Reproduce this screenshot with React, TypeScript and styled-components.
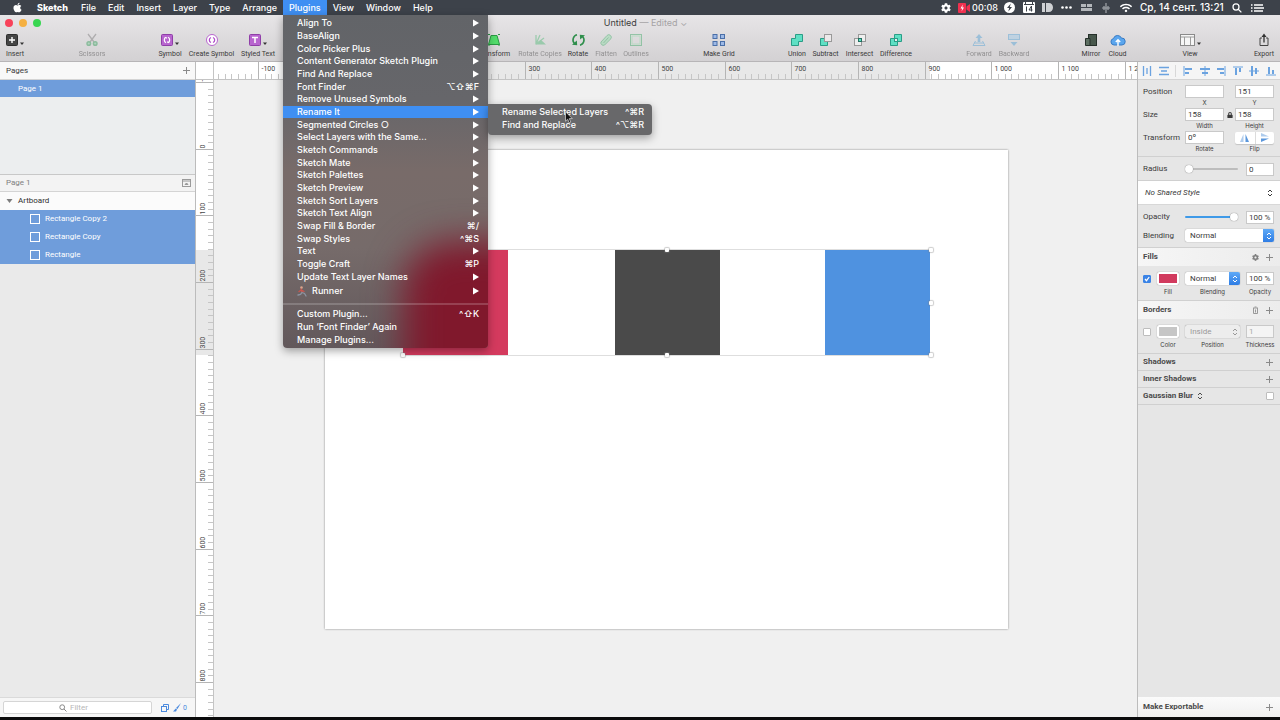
import React, { useState } from 'react';
import styled, { createGlobalStyle, css } from 'styled-components';
import { FaApple, FaCog, FaWifi, FaLock } from 'react-icons/fa';

const ui = `Roboto, "Liberation Sans", sans-serif`;
const menuFont = `Inter, "Liberation Sans", "DejaVu Sans", sans-serif`;

const GlobalStyle = createGlobalStyle`
  * { box-sizing: border-box; }
  body { margin: 0; background: #0b0b0c; font: 8px/10px ${ui}; color: #3a3a3a; }
  button, input, select { font: inherit; color: inherit; margin: 0; padding: 0; border: 0; background: none; }
  ul { list-style: none; margin: 0; padding: 0; }
  svg { display: block; }
`;

const Screen = styled.div`
  display: flex;
  flex-direction: column;
  height: 100vh;
  padding-bottom: 3px;
  overflow: hidden;
`;

/* ---------- System menu bar ---------- */

const MenuBar = styled.header`
  display: flex;
  justify-content: space-between;
  flex: none;
  height: 15px;
  background: #3d424a;
  color: #fff;
  font: 500 9px/15px ${menuFont};
`;

const MenuTitles = styled.nav`
  display: flex;
  padding-left: 12px;
`;

const AppleMark = styled.span`
  display: flex;
  align-items: center;
  width: 19px;
`;

const MenuSlot = styled.div`
  position: relative;
`;

const MenuTitle = styled.button<{ $bold?: boolean; $open?: boolean }>`
  height: 15px;
  padding: 0 ${(p) => (p.$bold ? 7 : 6)}px 0 6px;
  line-height: 15px;
  font-weight: ${(p) => (p.$bold ? 800 : 500)};
  background: ${(p) => (p.$open ? '#3f8ff3' : 'transparent')};
`;

const StatusItems = styled.div`
  display: flex;
  align-items: center;
  padding-right: 10px;
`;

const Status = styled.span<{ $w: number }>`
  display: flex;
  align-items: center;
  justify-content: center;
  width: ${(p) => p.$w}px;
  height: 15px;
`;

const Clock = styled.span`
  width: 94px;
  padding-left: 4px;
  font-size: 10px;
  white-space: nowrap;
`;

/* ---------- Drop-down menus ---------- */

const menuShell = css`
  position: absolute;
  z-index: 10;
  border-radius: 0 0 4px 4px;
  box-shadow: 0 3px 8px rgba(0, 0, 0, 0.35);
  color: #fff;
  font: 500 9px/12px ${menuFont};
`;

const Dropdown = styled.div`
  ${menuShell}
  top: 15px;
  left: 0;
  width: 205px;
  padding: 2px 0;
`;

const Vibrancy = styled.div`
  position: absolute;
  inset: 0;
  z-index: -1;
  overflow: hidden;
  border-radius: 0 0 4px 4px;
  background: linear-gradient(#626468, #66666a 25%, #786b69 47%, #766b6a 70%, #62585b);

  &::after {
    content: '';
    position: absolute;
    left: 120px;
    top: 226px;
    width: 150px;
    height: 180px;
    border-radius: 50px;
    background: #80182c;
    filter: blur(18px);
  }
`;

const Submenu = styled.div`
  ${menuShell}
  top: -2px;
  left: 100%;
  width: 164px;
  padding: 2px 0 3px;
  border-radius: 0 4px 4px 4px;
  background: #68686a;
`;

const MenuList = styled.ul<{ $height: number }>`
  display: grid;
  grid-auto-rows: 1fr;
  height: ${(p) => p.$height}px;
`;

const MenuItem = styled.li`
  position: relative;
  display: grid;
`;

const MenuCommand = styled.button<{ $active?: boolean; $tight?: boolean }>`
  display: flex;
  align-items: center;
  justify-content: space-between;
  width: 100%;
  padding: 0 ${(p) => (p.$tight ? 8 : 9)}px 0 14px;
  text-align: left;
  white-space: nowrap;
  background: ${(p) => (p.$active ? '#3f8ff3' : 'transparent')};
`;

const Shortcut = styled.span`
  font-family: Inter, 'DejaVu Sans', sans-serif;
`;

const Separator = styled.hr`
  height: 2px;
  margin: 4px 0 3px;
  border: 0;
  background: rgba(255, 255, 255, 0.18);
`;

const WithIcon = styled.span`
  display: flex;
  align-items: center;
  gap: 5px;
`;

/* ---------- Window and toolbar ---------- */

const Window = styled.div`
  display: flex;
  flex-direction: column;
  flex: 1;
  min-height: 0;
`;

const TitleBar = styled.div`
  display: grid;
  grid-template-columns: 1fr auto 1fr;
  align-items: center;
  height: 15px;
  padding-left: 5px;
  font: 9px/15px ${menuFont};
`;

const Chrome = styled.div`
  flex: none;
  height: 47px;
  border-bottom: 1px solid #b7b5b7;
  background: linear-gradient(#e7e5e7, #d3d1d3);
`;

const Lights = styled.div`
  display: flex;
  gap: 6px;
`;

const Light = styled.button<{ $color: string }>`
  width: 8px;
  height: 8px;
  border-radius: 4px;
  background: ${(p) => p.$color};
`;

const Title = styled.span`
  padding-left: 6px;
  color: #3c3c3c;
`;

const Muted = styled.span`
  color: #a5a3a5;
`;

const Tools = styled.div`
  display: flex;
  height: 31px;
`;

const Tool = styled.button<{ $w: number; $off?: boolean }>`
  display: flex;
  flex-direction: column;
  align-items: center;
  flex: none;
  width: ${(p) => p.$w}px;
  padding-top: 1px;
  font: 7px/10px ${ui};
  white-space: nowrap;
  opacity: ${(p) => (p.$off ? 0.45 : 1)};
`;

const ToolFace = styled.span`
  display: flex;
  align-items: center;
  gap: 2px;
  height: 17px;
  margin-bottom: 1px;
`;

const FlexSpace = styled.span<{ $grow: number }>`
  flex: ${(p) => p.$grow} 0 0;
`;

const Body = styled.div`
  display: flex;
  flex: 1;
  min-height: 0;
`;

/* ---------- Layer sidebar ---------- */

const Sidebar = styled.aside`
  display: flex;
  flex-direction: column;
  flex: none;
  width: 196px;
  border-right: 1px solid #bcbcbc;
  background: #eaeaea;
`;

const PaneHeader = styled.div<{ $muted?: boolean }>`
  display: flex;
  align-items: center;
  justify-content: space-between;
  height: 18px;
  padding: 0 4px 0 6px;
  border-bottom: 1px solid #d4d4d4;
  border-top: ${(p) => (p.$muted ? '1px solid #c8c8c8' : '0')};
  background: ${(p) => (p.$muted ? '#f3f3f3' : '#f8f8f8')};
  color: ${(p) => (p.$muted ? '#808080' : '#3a3a3a')};
`;

const IconButton = styled.button`
  display: flex;
  align-items: center;
  justify-content: center;
  width: 10px;
  height: 10px;
  color: #808080;
`;

const Pages = styled.ul`
  height: 94px;
  background: #eceeef;
`;

const PageRow = styled.li`
  height: 17px;
  padding-left: 18px;
  line-height: 18px;
  background: #6f9ddb;
  color: #fff;
`;

const LayerRow = styled.li<{ $selected?: boolean }>`
  display: flex;
  align-items: center;
  gap: ${(p) => (p.$selected ? 5 : 4)}px;
  height: 18px;
  padding-left: ${(p) => (p.$selected ? 30 : 5)}px;
  background: ${(p) => (p.$selected ? '#6f9ddb' : '#fbfbfb')};
  color: ${(p) => (p.$selected ? '#fff' : '#2f2f2f')};
`;

const Fill = styled.div`
  flex: 1;
`;

const SidebarFooter = styled.footer`
  display: flex;
  align-items: center;
  height: 20px;
  padding: 0 4px 0 3px;
  border-top: 1px solid #dadada;
  background: #f6f6f6;
  color: #4b8ade;
`;

const FilterBox = styled.label`
  display: flex;
  align-items: center;
  gap: 3px;
  width: 154px;
  height: 13px;
  margin-right: 9px;
  padding-left: 55px;
  border: 1px solid #d5d5d5;
  border-radius: 2px;
  background: #fff;
  color: #8a8a8a;
`;

const FilterInput = styled.input`
  width: 60px;
  height: 10px;
  outline: 0;
  &::placeholder { color: #b8b8b8; }
`;

const FooterToggle = styled.button`
  display: flex;
  align-items: center;
  gap: 2px;
  margin-right: 4px;
  font-size: 7px;
`;

/* ---------- Canvas ---------- */

const Editor = styled.main`
  display: grid;
  grid-template-columns: 18px 1fr;
  grid-template-rows: 18px 1fr;
  flex: 1;
  min-width: 0;
  overflow: hidden;
  background: #f0f0f0;
`;

const Corner = styled.div`
  border-right: 1px solid #c4c4c4;
  border-bottom: 1px solid #c4c4c4;
  background: #fff;
`;

const RulerPane = styled.div<{ $vertical?: boolean }>`
  overflow: hidden;
  background: #fff;
  border-bottom: ${(p) => (p.$vertical ? '0' : '1px solid #c4c4c4')};
  border-right: ${(p) => (p.$vertical ? '1px solid #c4c4c4' : '0')};

  svg { width: 100%; height: 100%; }
  text { font: 7px ${ui}; fill: #444; }
`;

const Canvas = styled.div`
  position: relative;
  overflow: hidden;
`;

const Artboard = styled.div`
  position: absolute;
  left: 111px;
  top: 70px;
  width: 683px;
  height: 479px;
  background: #fff;
  box-shadow: 0 0 2px rgba(0, 0, 0, 0.45);
`;

const Selection = styled.div`
  position: absolute;
  left: 78px;
  top: 99px;
  width: 528px;
  height: 107px;
  border: solid #dedede;
  border-width: 1px 0;
`;

const Shape = styled.div<{ $x: number; $color: string }>`
  position: absolute;
  left: ${(p) => p.$x}px;
  top: 0;
  width: 105px;
  height: 105px;
  background: ${(p) => p.$color};
`;

const Handle = styled.span<{ $x: number; $y: number }>`
  position: absolute;
  left: calc(${(p) => p.$x}% - 2px);
  top: calc(${(p) => p.$y}% - 2px);
  width: 4px;
  height: 4px;
  border-radius: 1px;
  background: #fff;
  box-shadow: 0 0 1px 1px rgba(130, 130, 130, 0.4);
`;

const Pointer = styled.svg`
  position: absolute;
  z-index: 20;
  left: 77px;
  top: 7px;
`;

/* ---------- Inspector ---------- */

const Inspector = styled.aside`
  display: flex;
  flex-direction: column;
  flex: none;
  width: 143px;
  border-left: 1px solid #bcbcbc;
  background: #e6e6e6;
`;

const AlignBar = styled.div`
  display: flex;
  align-items: center;
  justify-content: space-between;
  height: 18px;
  padding: 0 4px;
  border-bottom: 1px solid #d4d4d4;
  background: #f5f5f5;
`;

const AlignRule = styled.span`
  width: 1px;
  height: 12px;
  background: #d8d8d8;
`;

const Group = styled.section<{ $height: number; $top: number }>`
  height: ${(p) => p.$height}px;
  padding: ${(p) => p.$top}px 6px 0 5px;
  border-bottom: 1px solid #d0d0d0;
`;

const PairRow = styled.div`
  display: grid;
  grid-template-columns: 42px 39px 11px 39px;
  grid-template-rows: 13px 10px;
  justify-items: center;
  align-items: center;
  height: 23px;
`;

const RowName = styled.span`
  justify-self: start;
`;

const Caption = styled.label<{ $col: number }>`
  grid-column: ${(p) => p.$col};
  grid-row: 2;
  font: 6px/8px ${menuFont};
  white-space: nowrap;
`;

const Field = styled.input`
  width: 100%;
  height: 13px;
  padding: 0 1px 0 2px;
  border: 1px solid #c9c9c9;
  background: #fff;
  outline: 0;
  &:disabled { color: #a8a8a8; background: #f4f4f4; }
`;

const FlipPair = styled.div`
  display: grid;
  grid-template-columns: 1fr 1fr;
  width: 100%;
  height: 12px;
  border-radius: 2px;
  background: #fff;
  box-shadow: 0 1px 1px rgba(0, 0, 0, 0.15);
`;

const FlipButton = styled.button`
  display: flex;
  align-items: center;
  justify-content: center;
  & + & { border-left: 1px solid #dcdcdc; }
`;

const SliderRow = styled.div`
  display: grid;
  grid-template-columns: 42px 53px 28px;
  justify-items: start;
  align-items: center;
  height: 18px;

  & > :last-child { margin-left: 8px; }
`;

const Slider = styled.input<{ $blue?: boolean }>`
  appearance: none;
  width: 100%;
  height: 8px;
  &::-webkit-slider-runnable-track {
    height: 2px;
    border-radius: 1px;
    background: ${(p) => (p.$blue ? '#3f9ae8' : '#bdbdbd')};
  }
  &::-webkit-slider-thumb {
    appearance: none;
    width: 8px;
    height: 8px;
    margin-top: -3px;
    border-radius: 4px;
    background: #fff;
    box-shadow: 0 0 1px rgba(0, 0, 0, 0.6);
  }
`;

const SelectRow = styled.div`
  display: grid;
  grid-template-columns: 42px 89px;
  align-items: center;
  height: 19px;
`;

const SelectBox = styled.span`
  position: relative;
  display: block;
  width: 100%;
`;

const Popup = styled.select`
  appearance: none;
  display: block;
  width: 100%;
  height: 13px;
  padding: 0 5px;
  border-radius: 2px;
  background: #fff;
  box-shadow: 0 0 1px rgba(0, 0, 0, 0.5);
  &:disabled { color: #999; opacity: 1; background: #ededed; }
`;

const PopupCap = styled.span<{ $plain?: boolean }>`
  position: absolute;
  right: 0;
  top: 0;
  display: flex;
  align-items: center;
  justify-content: center;
  width: 11px;
  height: 13px;
  border-radius: 0 2px 2px 0;
  color: ${(p) => (p.$plain ? '#999' : '#fff')};
  background: ${(p) => (p.$plain ? 'transparent' : 'linear-gradient(#5ea9f7, #2f7de4)')};
  pointer-events: none;
`;

const SharedStyle = styled.button`
  display: flex;
  align-items: center;
  justify-content: space-between;
  height: 24px;
  padding: 0 7px;
  border-bottom: 1px solid #d8d8d8;
  background: #fff;
  font: italic 8px/10px ${ui};
`;

const SectionHead = styled.h2<{ $light?: boolean }>`
  display: flex;
  align-items: center;
  gap: 4px;
  height: ${(p) => (p.$light ? 18 : 17)}px;
  margin: 0;
  padding: 0 6px 0 5px;
  border-bottom: ${(p) => (p.$light ? '0' : '1px solid #d0d0d0')};
  background: ${(p) => (p.$light ? 'linear-gradient(90deg, #f6f6f6, #ececec)' : 'transparent')};
  font: 700 8px/10px ${ui};
  color: #4a4a4a;
`;

const StyleRow = styled.div`
  display: grid;
  grid-template-columns: 8px 22px 55px 28px;
  grid-template-rows: 13px 13px;
  justify-content: space-between;
  justify-items: center;
  align-items: center;
`;

const Tick = styled.input`
  appearance: none;
  display: block;
  width: 8px;
  height: 8px;
  border: 1px solid #bdbdbd;
  border-radius: 1px;
  background: #fff;
  &:checked { border-color: #3b84e6; background: #3b84e6; }
`;

const TickMark = styled.span`
  position: relative;
  display: block;
  width: 8px;
  height: 8px;
  svg { position: absolute; inset: 0; pointer-events: none; }
`;

const Well = styled.button<{ $color: string }>`
  width: 22px;
  height: 13px;
  border: 2px solid #fff;
  border-radius: 2px;
  background: ${(p) => p.$color};
  box-shadow: 0 0 1px rgba(0, 0, 0, 0.5);
`;

const InspectorFooter = styled.footer`
  display: flex;
  align-items: center;
  justify-content: space-between;
  height: 20px;
  padding: 0 6px 0 5px;
  background: linear-gradient(#fbfbfb, #efefef);
  font-weight: 700;
  color: #4a4a4a;
`;

/* ---------- Drawings ---------- */

const Plus = () => (
  <svg width="9" height="9" viewBox="0 0 9 9" stroke="#8a8a8a"><path d="M4.5 1v7M1 4.5h7" /></svg>
);
const Caret = () => (
  <svg width="4" height="15" viewBox="0 0 4 15" fill="#333"><path d="M0 10.500h4l-2 2.500z" /></svg>
);
const UpDown = () => (
  <svg width="6" height="8" viewBox="0 0 6 8" fill="none" stroke="currentColor"><path d="M1 3l2-2 2 2M1 5l2 2 2-2" /></svg>
);
const Arrow = () => (
  <svg width="6" height="8" viewBox="0 0 6 8" fill="#fff"><path d="M0 0.500v7l6-3.500z" /></svg>
);
const Lens = ({ size = 8 }: { size?: number }) => (
  <svg width={size} height={size} viewBox="0 0 8 8" fill="none" stroke="currentColor"><circle cx="3.200" cy="3.200" r="2.400" /><path d="M5 5l2.500 2.500" /></svg>
);

const art = (children: React.ReactNode, w = 14) => (
  <svg width={w} height="14" viewBox={`0 0 ${w} 14`} fill="none">{children}</svg>
);

const icons: Record<string, React.ReactNode> = {
  insert: art(<><rect x="0.500" y="1.500" width="11" height="11" rx="1" fill="#454545" stroke="#2e2e2e" /><path d="M6 4v6M3 7h6" stroke="#fff" strokeWidth="1.400" /></>, 12),
  scissors: art(<><path d="M3 1l6 8M11 1L5 9" stroke="#777" strokeWidth="1.300" /><circle cx="3.800" cy="10.500" r="1.800" fill="#7fcf9b" stroke="#2f9a55" strokeWidth="1.500" /><circle cx="10.200" cy="10.500" r="1.800" fill="#7fcf9b" stroke="#2f9a55" strokeWidth="1.500" /></>),
  symbol: art(<><rect x="0.500" y="1.500" width="11" height="11" rx="1" fill="#b865cf" stroke="#8f3fa8" /><path d="M5 4.300a3 3 0 0 0 0 5.400M7 9.700a3 3 0 0 0 0-5.400" stroke="#fff" strokeWidth="1.200" /><path d="M3.200 4h2.500v2zM8.800 10H6.300V8z" fill="#fff" /></>, 12),
  create: art(<><circle cx="7" cy="7" r="5.500" fill="#fff" stroke="#b865cf" /><path d="M6 4.500a2.700 2.700 0 0 0 0 5M8 9.500a2.700 2.700 0 0 0 0-5" stroke="#b04fca" strokeWidth="1.300" /></>),
  text: art(<><rect x="0.500" y="1.500" width="11" height="11" rx="1" fill="#b865cf" stroke="#8f3fa8" /><path d="M3 4.500h6M6 4.500V10" stroke="#fff" strokeWidth="1.500" /></>, 12),
  transform: art(<><path d="M4 2.500h6l2.500 9h-11z" fill="#52dd6b" stroke="#2b9a45" /><path d="M1 1.500h12M1 12h12" stroke="#2b9a45" strokeDasharray="2 8" /></>),
  copies: art(<><path d="M2 11.500h11L8 7z" fill="#4cb874" /><path d="M3 2v9M3 11l8-6M3 11l4-9" stroke="#4cb874" strokeWidth="1.300" /></>),
  rotate: art(<><path d="M6 1.800A5.200 5.200 0 0 0 3.500 10.500M9 12.200a5.200 5.200 0 0 0 2.500-8.700" stroke="#2f8f4c" strokeWidth="1.600" /><path d="M1 11.800l5.200.4L5.800 7.500zM14 2.200L8.800 1.800l.4 4.700z" fill="#2f8f4c" /></>, 15),
  flatten: art(<><path d="M2 9l6-6.500a2.500 2.500 0 0 1 3.600 3.500l-6 6A2.500 2.500 0 0 1 2 9z" fill="#8fdba6" stroke="#3ba764" /><path d="M4.500 10l5-5.500" stroke="#3ba764" /></>),
  outlines: art(<><rect x="1.500" y="1.500" width="11" height="11" stroke="#3ba764" /><rect x="3" y="3" width="8" height="8" stroke="#8fdba6" /></>),
  grid: art(<g fill="#9db9e6" stroke="#4a6fa8"><rect x="1" y="1.500" width="4" height="4" /><rect x="8.500" y="1.500" width="4" height="4" /><rect x="1" y="8.500" width="4" height="4" /><rect x="8.500" y="8.500" width="4" height="4" /></g>),
  union: art(<path d="M5.500 1.500h7v7h-4v4h-7v-7h4z" fill="#5fe0c4" stroke="#2a9d87" />),
  subtract: art(<><path d="M1.500 5.500h4v3h3v4h-7z" fill="#5fe0c4" stroke="#2a9d87" /><rect x="5.500" y="1.500" width="7" height="7" fill="#ece9ea" stroke="#999" /></>),
  intersect: art(<><rect x="5.500" y="1.500" width="7" height="7" fill="#eee" stroke="#999" /><rect x="1.500" y="5.500" width="7" height="7" fill="#eee" stroke="#999" /><rect x="5.500" y="5.500" width="3" height="3" fill="#5fe0c4" stroke="#246f61" /></>),
  difference: art(<><path d="M5.500 1.500h7v7h-4v4h-7v-7h4z" fill="#5fe0c4" stroke="#2a9d87" /><rect x="5.500" y="5.500" width="3" height="3" fill="#eee" stroke="#2a9d87" /></>),
  forward: art(<><path d="M7 1l3.500 4H8.300v4H5.700V5H3.500z" fill="#4f9fd4" /><path d="M3.500 8l-2.500 4.500h12L10.500 8" stroke="#4f9fd4" /><path d="M2 10h10" stroke="#4f9fd4" /></>),
  backward: art(<><rect x="1.500" y="1.500" width="11" height="5" fill="#9cc8e6" stroke="#4f9fd4" /><path d="M7 13L3.500 9h7z" fill="#4f9fd4" /></>),
  mirror: art(<><rect x="4.500" y="1.500" width="8" height="11" fill="#48584d" stroke="#26302a" /><path d="M1.500 5.500h4.500v7H1.500z" fill="#5d6f62" stroke="#26302a" /></>),
  cloud: art(<><path d="M4 12a3.300 3.300 0 0 1-.5-6.500A4.200 4.200 0 0 1 11.400 5 3.500 3.500 0 0 1 12 12z" fill="#5ba6ee" stroke="#3a7cc4" /><path d="M8 13V7M5.800 9L8 6.700 10.200 9" stroke="#fff" strokeWidth="1.400" /></>, 16),
  view: art(<><rect x="0.500" y="1.500" width="14" height="11" fill="#f6f6f6" stroke="#8a8a8a" /><path d="M1 4h13M4.500 4v8M10.500 4v8" stroke="#9c9c9c" /></>, 15),
  export: art(<><path d="M5 5H3v7.500h8V5H9" stroke="#444" /><path d="M7 9.500V3" stroke="#333" strokeWidth="1.300" /><path d="M4.500 4L7 .5 9.500 4z" fill="#333" /></>),
};

/* ---------- Ruler ---------- */

const STEP = 20 / 3;

function Ruler({ origin, from, to, vertical }: { origin: number; from: number; to: number; vertical?: boolean }) {
  const length = vertical ? window.innerHeight : window.innerWidth;
  const first = -Math.floor(origin / STEP);
  const marks = Array.from({ length: Math.ceil(length / STEP) }, (_, i) => i + first);
  return (
    <RulerPane $vertical={vertical}>
      <svg>
        {vertical
          ? <rect x="0" y={from} width="17" height={to - from} fill="#e8e8e8" />
          : <rect x={from} y="0" width={to - from} height="17" fill="#e8e8e8" />}
        {marks.map((n) => {
          const at = Math.round(origin + n * STEP - 0.5) + 0.5;
          const major = n % 10 === 0;
          const near = major ? 0 : 12;
          return (
            <g key={n}>
              {vertical
                ? <line x1={near} x2="17" y1={at} y2={at} stroke={major ? '#b5b5b5' : '#c6c6c6'} />
                : <line y1={near} y2="17" x1={at} x2={at} stroke={major ? '#b5b5b5' : '#c6c6c6'} />}
              {major && (vertical
                ? <text transform={`translate(9 ${at - 1}) rotate(-90)`}>{(n * 10).toLocaleString('en').replace(',', ' ')}</text>
                : <text x={at + 3} y="9">{(n * 10).toLocaleString('en').replace(',', ' ')}</text>)}
            </g>
          );
        })}
      </svg>
    </RulerPane>
  );
}

/* ---------- Data ---------- */

type Entry = { name: string; keys?: string; open?: boolean };

const pluginMenu: Entry[] = [
  { name: 'Align To' }, { name: 'BaseAlign' }, { name: 'Color Picker Plus' },
  { name: 'Content Generator Sketch Plugin' }, { name: 'Find And Replace' },
  { name: 'Font Finder', keys: '⌥⇧⌘F' }, { name: 'Remove Unused Symbols' },
  { name: 'Rename It', open: true }, { name: 'Segmented Circles ○' },
  { name: 'Select Layers with the Same…' }, { name: 'Sketch Commands' }, { name: 'Sketch Mate' },
  { name: 'Sketch Palettes' }, { name: 'Sketch Preview' }, { name: 'Sketch Sort Layers' },
  { name: 'Sketch Text Align' }, { name: 'Swap Fill & Border', keys: '⌘/' },
  { name: 'Swap Styles', keys: '^⌘S' }, { name: 'Text' }, { name: 'Toggle Craft', keys: '⌘P' },
  { name: 'Update Text Layer Names' },
];

type ToolDef = { icon: string; label: string; w: number; off?: boolean; caret?: boolean };
const toolbar: (ToolDef | number)[] = [
  { icon: 'insert', label: 'Insert', w: 30, caret: true }, 49,
  { icon: 'scissors', label: 'Scissors', w: 26, off: true }, 50,
  { icon: 'symbol', label: 'Symbol', w: 30, caret: true },
  { icon: 'create', label: 'Create Symbol', w: 53 },
  { icon: 'text', label: 'Styled Text', w: 40, caret: true }, 196,
  { icon: 'transform', label: 'Transform', w: 40 },
  { icon: 'copies', label: 'Rotate Copies', w: 52, off: true },
  { icon: 'rotate', label: 'Rotate', w: 24 },
  { icon: 'flatten', label: 'Flatten', w: 32, off: true },
  { icon: 'outlines', label: 'Outlines', w: 28, off: true }, 50,
  { icon: 'grid', label: 'Make Grid', w: 38 }, 47,
  { icon: 'union', label: 'Union', w: 24 },
  { icon: 'subtract', label: 'Subtract', w: 33 },
  { icon: 'intersect', label: 'Intersect', w: 35 },
  { icon: 'difference', label: 'Difference', w: 38 }, 48,
  { icon: 'forward', label: 'Forward', w: 32, off: true },
  { icon: 'backward', label: 'Backward', w: 38, off: true }, 45,
  { icon: 'mirror', label: 'Mirror', w: 26 },
  { icon: 'cloud', label: 'Cloud', w: 27 }, 44,
  { icon: 'view', label: 'View', w: 30, caret: true }, 44,
  { icon: 'export', label: 'Export', w: 30 }, 1,
];

const alignments = [
  <path d="M1.500 0v10M8.500 0v10M5 2v6" strokeWidth="1.300" />,
  <path d="M0 1.500h10M0 8.500h10M2 5h6" strokeWidth="1.300" />,
  null,
  <><path d="M1 0v10" /><path d="M2 3h7M2 7h4" strokeWidth="2" /></>,
  <><path d="M5 0v10" /><path d="M0 3h10M2 7h6" strokeWidth="2" /></>,
  <><path d="M9 0v10" /><path d="M1 3h7M4 7h4" strokeWidth="2" /></>,
  <><path d="M0 1h10" /><path d="M3 2v7M7 2v4" strokeWidth="2" /></>,
  <><path d="M0 5h10" /><path d="M3 0v10M7 2v6" strokeWidth="2" /></>,
  <><path d="M0 9h10" /><path d="M3 1v7M7 4v4" strokeWidth="2" /></>,
];

function Entries({ items, height, tight }: { items: Entry[]; height: number; tight?: boolean }) {
  return (
    <MenuList $height={height}>
      {items.map((it) => (
        <MenuItem key={it.name}>
          <MenuCommand $active={it.open} $tight={tight}>
            <span>{it.name}</span>
            {it.keys ? <Shortcut>{it.keys}</Shortcut> : it.keys === undefined && <Arrow />}
          </MenuCommand>
          {it.open && (
            <Submenu>
              <Entries tight height={26} items={[{ name: 'Rename Selected Layers', keys: '^⌘R' }, { name: 'Find and Replace', keys: '^⌥⌘R' }]} />
              <Pointer width="8" height="13" viewBox="0 0 8 13">
                <path d="M0.500 0.800v9.400l2.200-2 1.500 3.600 1.600-.7-1.500-3.500h3z" fill="#111" stroke="#ddd" strokeWidth="0.700" />
              </Pointer>
            </Submenu>
          )}
        </MenuItem>
      ))}
    </MenuList>
  );
}

function PluginsDropdown() {
  return (
    <Dropdown>
      <Vibrancy />
      <Entries items={pluginMenu} height={266} />
      <MenuList $height={16}>
        <MenuItem>
          <MenuCommand>
            <WithIcon>
              <svg width="10" height="11" viewBox="0 0 10 11" fill="none" strokeLinecap="round">
                <circle cx="4.500" cy="1.600" r="1.300" fill="#d9a48c" />
                <path d="M4.200 3.200l.8 3M4.200 4L2 5.500M4.500 4l2.500 1.500" stroke="#c8564e" strokeWidth="1.400" />
                <path d="M5 6.500l2.500 1L9 10M5 6.500L3.500 8.500 1 9" stroke="#8c93a0" strokeWidth="1.300" />
              </svg>
              Runner
            </WithIcon>
            <Arrow />
          </MenuCommand>
        </MenuItem>
      </MenuList>
      <Separator />
      <Entries
        height={38}
        items={[{ name: 'Custom Plugin…', keys: '^⇧K' }, { name: 'Run ‘Font Finder’ Again', keys: '' }, { name: 'Manage Plugins…', keys: '' }]}
      />
    </Dropdown>
  );
}

function InspectorPanel() {
  const [fillOn, setFillOn] = useState(true);
  return (
    <Inspector>
      <AlignBar>
        {alignments.map((a, i) => a
          ? <IconButton key={i} aria-label="Align"><svg width="10" height="10" viewBox="0 0 10 10" stroke="#6ba3e0" fill="none">{a}</svg></IconButton>
          : <AlignRule key={i} />)}
      </AlignBar>
      <Group $height={77} $top={5}>
        <PairRow>
          <RowName>Position</RowName><Field id="x" /><span /><Field id="y" defaultValue="151" />
          <Caption $col={2} htmlFor="x">X</Caption><Caption $col={4} htmlFor="y">Y</Caption>
        </PairRow>
        <PairRow>
          <RowName>Size</RowName><Field id="w" defaultValue="158" /><FaLock size={6} /><Field id="h" defaultValue="158" />
          <Caption $col={2} htmlFor="w">Width</Caption><Caption $col={4} htmlFor="h">Height</Caption>
        </PairRow>
        <PairRow>
          <RowName>Transform</RowName><Field id="r" defaultValue="0º" /><span />
          <FlipPair id="flip">
            <FlipButton aria-label="Flip horizontally"><svg width="9" height="8" viewBox="0 0 9 8" fill="#5b97dc"><path d="M3.500 0v8H0z" opacity="0.500" /><path d="M5.500 0v8H9z" /></svg></FlipButton>
            <FlipButton aria-label="Flip vertically"><svg width="8" height="9" viewBox="0 0 8 9" fill="#5b97dc"><path d="M0 3.500h8L0 0z" opacity="0.500" /><path d="M0 5.500h8L0 9z" /></svg></FlipButton>
          </FlipPair>
          <Caption $col={2} htmlFor="r">Rotate</Caption><Caption as="span" $col={4}>Flip</Caption>
        </PairRow>
      </Group>
      <Group $height={24} $top={3}>
        <SliderRow>
          <label htmlFor="radius">Radius</label>
          <Slider id="radius" type="range" defaultValue={0} />
          <Field aria-label="Radius value" defaultValue="0" />
        </SliderRow>
      </Group>
      <SharedStyle>No Shared Style <UpDown /></SharedStyle>
      <Group $height={43} $top={3}>
        <SliderRow>
          <label htmlFor="opacity">Opacity</label>
          <Slider id="opacity" type="range" $blue defaultValue={100} />
          <Field aria-label="Opacity value" defaultValue="100 %" />
        </SliderRow>
        <SelectRow>
          <label htmlFor="blend">Blending</label>
          <SelectBox><Popup id="blend"><option>Normal</option></Popup><PopupCap><UpDown /></PopupCap></SelectBox>
        </SelectRow>
      </Group>
      <SectionHead $light>Fills <Fill />
        <IconButton aria-label="Fill options"><FaCog size={7} /></IconButton>
        <IconButton aria-label="Add fill"><Plus /></IconButton>
      </SectionHead>
      <Group $height={35} $top={6}>
        <StyleRow>
          <TickMark>
            <Tick type="checkbox" aria-label="Fill enabled" checked={fillOn} onChange={(e) => setFillOn(e.target.checked)} />
            {fillOn && <svg viewBox="0 0 8 8" fill="none" stroke="#fff" strokeWidth="1.200"><path d="M2 4l1.500 1.700L6.200 2" /></svg>}
          </TickMark>
          <Well id="fill" $color="#d13a5e" />
          <SelectBox><Popup id="fillBlend"><option>Normal</option></Popup><PopupCap><UpDown /></PopupCap></SelectBox>
          <Field id="fillOpacity" defaultValue="100 %" />
          <Caption $col={2} htmlFor="fill">Fill</Caption>
          <Caption $col={3} htmlFor="fillBlend">Blending</Caption>
          <Caption $col={4} htmlFor="fillOpacity">Opacity</Caption>
        </StyleRow>
      </Group>
      <SectionHead $light>Borders <Fill />
        <IconButton aria-label="Remove border">
          <svg width="7" height="8" viewBox="0 0 7 8" fill="none" stroke="#999"><path d="M1 2h5M1.500 2v5.500h4V2M2.500 1h2M3.500 3.500v3" /></svg>
        </IconButton>
        <IconButton aria-label="Add border"><Plus /></IconButton>
      </SectionHead>
      <Group $height={35} $top={6}>
        <StyleRow>
          <Tick type="checkbox" aria-label="Border enabled" />
          <Well id="color" $color="#c6c6c6" />
          <SelectBox><Popup id="position" disabled><option>Inside</option></Popup><PopupCap $plain><UpDown /></PopupCap></SelectBox>
          <Field id="thickness" disabled defaultValue="1" />
          <Caption $col={2} htmlFor="color">Color</Caption>
          <Caption $col={3} htmlFor="position">Position</Caption>
          <Caption $col={4} htmlFor="thickness">Thickness</Caption>
        </StyleRow>
      </Group>
      <SectionHead>Shadows <Fill /><IconButton aria-label="Add shadow"><Plus /></IconButton></SectionHead>
      <SectionHead>Inner Shadows <Fill /><IconButton aria-label="Add inner shadow"><Plus /></IconButton></SectionHead>
      <SectionHead>Gaussian Blur <UpDown /><Fill /><Tick type="checkbox" aria-label="Gaussian blur enabled" /></SectionHead>
      <Fill />
      <InspectorFooter>Make Exportable <IconButton aria-label="Make exportable"><Plus /></IconButton></InspectorFooter>
    </Inspector>
  );
}

export default function App() {
  return (
    <Screen>
      <GlobalStyle />
      <MenuBar>
        <MenuTitles>
          <AppleMark><FaApple size={11} /></AppleMark>
          {['Sketch', 'File', 'Edit', 'Insert', 'Layer', 'Type', 'Arrange', 'Plugins', 'View', 'Window', 'Help'].map((t) => (
            <MenuSlot key={t}>
              <MenuTitle $bold={t === 'Sketch'} $open={t === 'Plugins'}>{t}</MenuTitle>
              {t === 'Plugins' && <PluginsDropdown />}
            </MenuSlot>
          ))}
        </MenuTitles>
        <StatusItems>
          <Status $w={20}><FaCog size={10} /></Status>
          <Status $w={15}>
            <svg width="12" height="10" viewBox="0 0 12 10"><rect width="8" height="10" rx="1" fill="#f0304f" /><path d="M8.500 3.500L12 1v8L8.500 6.500z" fill="#f0304f" /><path d="M4.800 1.500L2.500 5.500h1.700L3.500 8.500 6 4.500H4.300z" fill="#fff" /></svg>
          </Status>
          <Status $w={28}>00:08</Status>
          <Status $w={21}>
            <svg width="11" height="11" viewBox="0 0 11 11"><circle cx="5.500" cy="5.500" r="5.500" fill="#fff" /><path d="M6.800 1.500L3 6h2.200L4.300 9.500 8 5H5.800z" fill="#3d424a" /></svg>
          </Status>
          <Status $w={18}>
            <svg width="12" height="11" viewBox="0 0 12 11"><rect width="12" height="11" rx="1" fill="#fff" /><path d="M1 2.500h10M2.500 0v2M9.500 0v2" stroke="#3d424a" /><path d="M3.500 4.500v5M8.500 4v5.500M8.500 4L6 8h3.500" stroke="#3d424a" fill="none" /></svg>
          </Status>
          <Status $w={19}>
            <svg width="11" height="9" viewBox="0 0 11 9" fill="#cfd1d4"><path d="M0 0h3v9H0zM4 0h3a4 4.500 0 0 1 0 9H4z" /></svg>
          </Status>
          <Status $w={19}>
            <svg width="11" height="3" viewBox="0 0 11 3" fill="#fff"><circle cx="1.500" cy="1.500" r="1.300" /><circle cx="5.500" cy="1.500" r="1.300" /><circle cx="9.500" cy="1.500" r="1.300" /></svg>
          </Status>
          <Status $w={20}>
            <svg width="11" height="7" viewBox="0 0 11 7"><path fill="#b4b7bb" d="M0 0h5v3H0zM6 0h5v3H6zM0 4h11v3H0z" /></svg>
          </Status>
          <Status $w={20}>
            <svg width="8" height="10" viewBox="0 0 8 10" stroke="#a2a6ab" strokeWidth="1.200"><path d="M4 0v10M2 3v4M6 3v4M0 5h8" /></svg>
          </Status>
          <Status $w={20}><FaWifi size={12} /></Status>
          <Clock>Ср, 14 сент. 13:21</Clock>
          <Status $w={14}><Lens size={10} /></Status>
          <Status $w={26}>
            <svg width="13" height="8" viewBox="0 0 13 8" stroke="#fff" strokeWidth="1.400"><path d="M3 1h9M3 4h10M3 7h9M0 1h1.500M0 4h1.500M0 7h1.500" /></svg>
          </Status>
        </StatusItems>
      </MenuBar>

      <Window>
        <Chrome>
          <TitleBar>
            <Lights>
              <Light $color="#f8425a" aria-label="Close" />
              <Light $color="#f5b042" aria-label="Minimize" />
              <Light $color="#38d651" aria-label="Zoom" />
            </Lights>
            <Title>Untitled <Muted>— Edited ⌄</Muted></Title>
            <span />
          </TitleBar>
          <Tools>
            {toolbar.map((t, i) => typeof t === 'number'
              ? <FlexSpace key={i} $grow={t} />
              : (
                <Tool key={i} $w={t.w} $off={t.off}>
                  <ToolFace>{icons[t.icon]}{t.caret && <Caret />}</ToolFace>
                  {t.label}
                </Tool>
              ))}
          </Tools>
        </Chrome>

        <Body>
          <Sidebar>
            <PaneHeader>Pages <IconButton aria-label="Add page"><Plus /></IconButton></PaneHeader>
            <Pages><PageRow>Page 1</PageRow></Pages>
            <PaneHeader $muted>Page 1
              <IconButton aria-label="Collapse pages">
                <svg width="9" height="8" viewBox="0 0 9 8" fill="none" stroke="#9a9a9a"><rect x="0.500" y="0.500" width="8" height="7" /><path d="M1 2h7" /><path d="M3 5.500h3L4.500 4z" fill="#8a8a8a" /></svg>
              </IconButton>
            </PaneHeader>
            <ul>
              <LayerRow>
                <svg width="9" height="6" viewBox="0 0 9 6" fill="#7d7d7d"><path d="M1.500 1h6l-3 4z" /></svg>
                Artboard
              </LayerRow>
              {['Rectangle Copy 2', 'Rectangle Copy', 'Rectangle'].map((n) => (
                <LayerRow key={n} $selected>
                  <svg width="10" height="10" viewBox="0 0 10 10" fill="none" stroke="#fff"><rect x="0.500" y="0.500" width="9" height="9" /></svg>
                  {n}
                </LayerRow>
              ))}
            </ul>
            <Fill />
            <SidebarFooter>
              <FilterBox><Lens /><FilterInput aria-label="Filter" placeholder="Filter" /></FilterBox>
              <FooterToggle aria-label="Filter by layer">
                <svg width="8" height="8" viewBox="0 0 8 8" fill="none" stroke="#4b8ade"><rect x="0.500" y="2.500" width="5" height="5" /><path d="M2.500 2V.5h5v5H6" /></svg>
              </FooterToggle>
              <FooterToggle>
                <svg width="8" height="9" viewBox="0 0 8 9" fill="#4b8ade"><path d="M8 0L4.500 6 3 5zM2.800 5.500L4 6.500 3 8.500H0z" /></svg>
                0
              </FooterToggle>
            </SidebarFooter>
          </Sidebar>

          <Editor>
            <Corner />
            <Ruler origin={111} from={189} to={716} />
            <Ruler vertical origin={69} from={170} to={275} />
            <Canvas>
              <Artboard>
                <Selection>
                  <Shape $x={0} $color="#d43a5e" />
                  <Shape $x={212} $color="#4a4a4a" />
                  <Shape $x={422} $color="#4f92e0" />
                  {[[0, 0], [50, 0], [100, 0], [0, 50], [100, 50], [0, 100], [50, 100], [100, 100]].map(([x, y]) => (
                    <Handle key={`${x}-${y}`} $x={x} $y={y} />
                  ))}
                </Selection>
              </Artboard>
            </Canvas>
          </Editor>

          <InspectorPanel />
        </Body>
      </Window>
    </Screen>
  );
}
